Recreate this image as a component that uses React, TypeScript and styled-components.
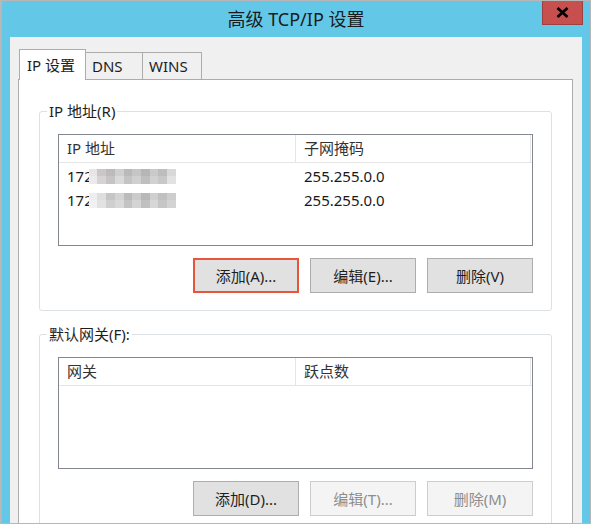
import React from 'react';
import styled, { createGlobalStyle } from 'styled-components';

const GlobalStyle = createGlobalStyle`
  html,
  body {
    margin: 0;
    padding: 0;
    background: #fff;
  }

  body {
    font-family: "Noto Sans", "Noto Sans CJK SC", sans-serif;
    color: #1e1e1e;
  }

  * {
    box-sizing: border-box;
  }
`;

const Window = styled.div`
  width: 591px;
  height: 524px;
  display: flex;
  flex-direction: column;
  border: 1px solid #b7b7b7;
  border-left-width: 2px;
  background: #63c8e8;
  overflow: hidden;
`;

const TitleBar = styled.div`
  flex-shrink: 0;
  height: 36px;
  display: grid;
  grid-template-columns: 1fr auto 1fr;
  padding: 0 7px;
`;

const Title = styled.div`
  grid-column: 2;
  font-size: 18px;
  line-height: 36px;
  color: #1a1a1a;
  white-space: nowrap;
`;

const CloseButton = styled.div`
  grid-column: 3;
  justify-self: end;
  width: 41px;
  height: 24px;
  display: flex;
  align-items: center;
  justify-content: center;
  border: 1px solid #9c4040;
  border-top: none;
  background: #c7504f;
`;

const Client = styled.div`
  flex: 1 0 auto;
  display: flex;
  flex-direction: column;
  margin: 0 8px;
  padding: 12px 9px 0 8px;
  background: #f0f0f0;
`;

const TabStrip = styled.div`
  flex-shrink: 0;
  height: 30px;
  display: flex;
  align-items: flex-end;
  padding-left: 1px;
`;

const Tab = styled.div<{ $active?: boolean; $width: number }>`
  position: relative;
  z-index: ${(p) => (p.$active ? 1 : 0)};
  width: ${(p) => p.$width}px;
  height: ${(p) => (p.$active ? 31 : 27)}px;
  margin-bottom: ${(p) => (p.$active ? -1 : 0)}px;
  padding: ${(p) => (p.$active ? '2px 0 0 7px' : '0 0 0 6px')};
  border: 1px solid #acacac;
  border-bottom: none;
  background: ${(p) => (p.$active ? '#fff' : '#f0f0f0')};
  font-size: 15px;
  line-height: 26px;
  white-space: nowrap;

  & + & {
    margin-left: -1px;
  }
`;

const Panel = styled.div`
  flex: 1 0 auto;
  padding: 21px 20px 0 20px;
  border: 1px solid #acacac;
  background: #fff;
`;

const GroupBox = styled.fieldset`
  margin: 0;
  padding: 0 18px 17px;
  border: 1px solid #dce1e6;
  border-radius: 3px;

  & + & {
    margin-top: 13px;
  }
`;

const GroupLegend = styled.legend`
  margin-left: -11px;
  padding: 0 2px;
  font-size: 15px;
  line-height: 20px;
`;

const ListView = styled.div`
  height: 112px;
  margin-top: 13px;
  border: 1px solid #828790;
  background: #fff;
`;

const HeaderRow = styled.div`
  display: flex;
  height: 28px;
  border-bottom: 1px solid #e5e5e5;
`;

const HeaderCell = styled.div<{ $width: number }>`
  width: ${(p) => p.$width}px;
  padding-left: 8px;
  border-right: 1px solid #e5e5e5;
  font-size: 15px;
  line-height: 27px;
  color: #333;
  white-space: nowrap;
`;

const Rows = styled.div`
  padding-top: 1px;
`;

const Row = styled.div`
  display: flex;
  height: 24px;
`;

const Cell = styled.div<{ $width: number }>`
  display: flex;
  align-items: center;
  width: ${(p) => p.$width}px;
  padding-left: 8px;
  font-size: 15px;
  line-height: 24px;
  color: #1a1a1a;
  white-space: nowrap;
`;

/* pixelated blocks hiding the rest of the address */
const Mosaic = styled.span`
  display: inline-grid;
  grid-template-columns: repeat(10, 1fr);
  grid-template-rows: repeat(2, 1fr);
  width: 87px;
  height: 15px;
  margin-left: -4px;
`;

const MosaicCell = styled.span<{ $shade: string }>`
  background: ${(p) => p.$shade};
`;

const ButtonRow = styled.div`
  display: flex;
  justify-content: flex-end;
  gap: 11px;
  margin-top: 12px;
`;

const Button = styled.div<{ $disabled?: boolean; $marked?: boolean }>`
  width: 106px;
  height: 35px;
  display: flex;
  align-items: center;
  justify-content: center;
  border: ${(p) =>
    p.$marked ? '2px solid #e9553a' : `1px solid ${p.$disabled ? '#cdcdcd' : '#adadad'}`};
  background: ${(p) => (p.$disabled ? '#f4f4f4' : '#e1e1e1')};
  color: ${(p) => (p.$disabled ? '#8d8d8d' : '#1e1e1e')};
  font-size: 15px;
  white-space: nowrap;
`;

const COLUMNS = [237, 235];

const ipRows = [
  {
    prefix: '172',
    mask: '255.255.0.0',
    mosaic: [
      '#e6e6e6', '#cbc7c9', '#bdbabc', '#d0cecf', '#b9b9b9', '#c6c6c6', '#b6b6b6', '#cacaca', '#bdbdbd', '#d8d8d8',
      '#ebebeb', '#d5d3d4', '#c6c4c5', '#dadada', '#c4c4c4', '#d0d0d0', '#bfbfbf', '#d1d1d1', '#c8c8c8', '#e2e2e2',
    ],
  },
  {
    prefix: '172',
    mask: '255.255.0.0',
    mosaic: [
      '#eeeeee', '#dedede', '#c5c5c5', '#d3d3d3', '#bbbbbb', '#cbcbcb', '#b8b8b8', '#cfcfcf', '#c0c0c0', '#cdcdcd',
      '#f1f1f1', '#e2e2e2', '#cfcfcf', '#d9d9d9', '#c3c3c3', '#d4d4d4', '#c0c0c0', '#d7d7d7', '#c6c6c6', '#d3d3d3',
    ],
  },
];

const CloseGlyph = () => (
  <svg width="13" height="11" viewBox="0 0 13 11">
    <path d="M1.5 1 L11.5 10 M11.5 1 L1.5 10" stroke="#000" strokeWidth="2.8" fill="none" />
  </svg>
);

interface ButtonSpec {
  label: string;
  disabled?: boolean;
  marked?: boolean;
}

interface ListGroupProps {
  legend: string;
  headers: string[];
  buttons: ButtonSpec[];
  children?: React.ReactNode;
}

const ListGroup = ({ legend, headers, buttons, children }: ListGroupProps) => (
  <GroupBox>
    <GroupLegend>{legend}</GroupLegend>
    <ListView>
      <HeaderRow>
        {headers.map((h, i) => (
          <HeaderCell key={h} $width={COLUMNS[i]}>
            {h}
          </HeaderCell>
        ))}
      </HeaderRow>
      <Rows>{children}</Rows>
    </ListView>
    <ButtonRow>
      {buttons.map((b) => (
        <Button key={b.label} $disabled={b.disabled} $marked={b.marked}>
          {b.label}
        </Button>
      ))}
    </ButtonRow>
  </GroupBox>
);

const App = () => (
  <>
    <GlobalStyle />
    <Window>
      <TitleBar>
        <Title>高级 TCP/IP 设置</Title>
        <CloseButton>
          <CloseGlyph />
        </CloseButton>
      </TitleBar>
      <Client>
        <TabStrip>
          <Tab $active $width={67}>IP 设置</Tab>
          <Tab $width={58}>DNS</Tab>
          <Tab $width={60}>WINS</Tab>
        </TabStrip>
        <Panel>
          <ListGroup
            legend="IP 地址(R)"
            headers={['IP 地址', '子网掩码']}
            buttons={[
              { label: '添加(A)...', marked: true },
              { label: '编辑(E)...' },
              { label: '删除(V)' },
            ]}
          >
            {ipRows.map((row, i) => (
              <Row key={i}>
                <Cell $width={COLUMNS[0]}>
                  {row.prefix}
                  <Mosaic>
                    {row.mosaic.map((shade, j) => (
                      <MosaicCell key={j} $shade={shade} />
                    ))}
                  </Mosaic>
                </Cell>
                <Cell $width={COLUMNS[1]}>{row.mask}</Cell>
              </Row>
            ))}
          </ListGroup>
          <ListGroup
            legend="默认网关(F):"
            headers={['网关', '跃点数']}
            buttons={[
              { label: '添加(D)...' },
              { label: '编辑(T)...', disabled: true },
              { label: '删除(M)', disabled: true },
            ]}
          />
        </Panel>
      </Client>
    </Window>
  </>
);

export default App;
